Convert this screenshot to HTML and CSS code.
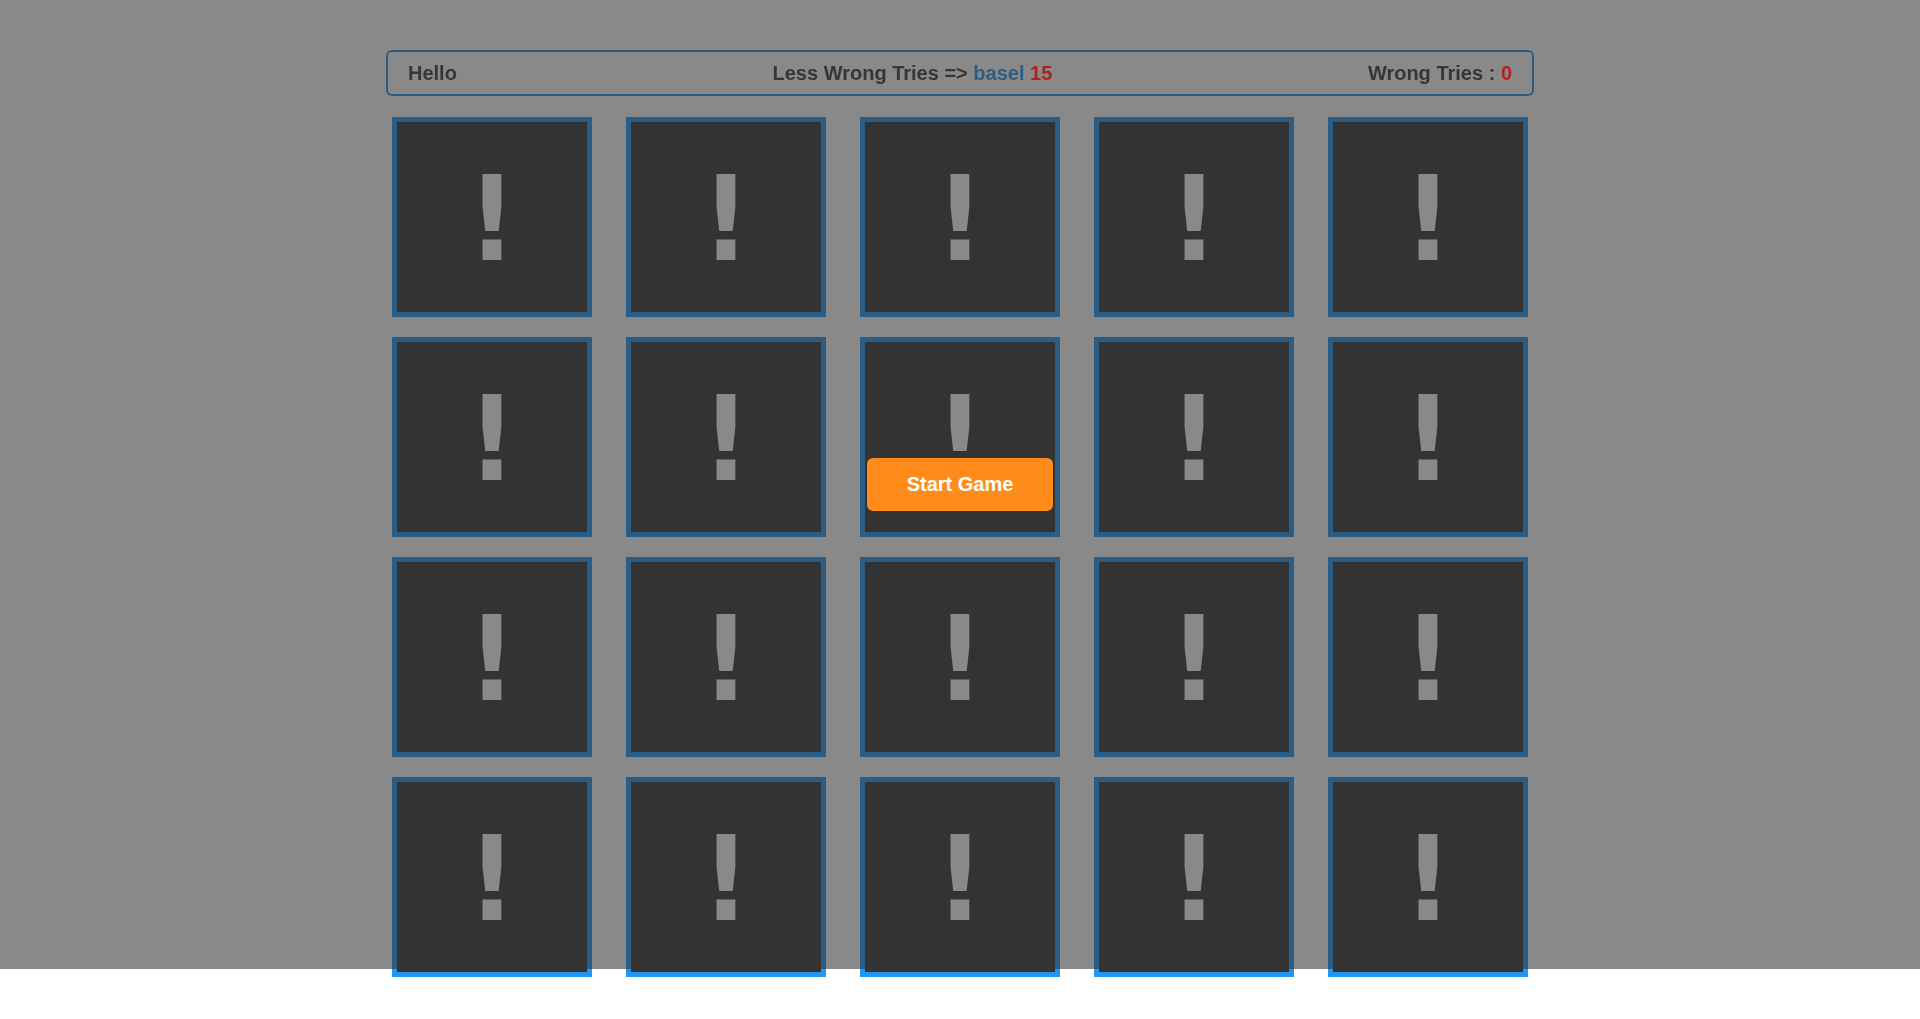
FILE: index.html
```html
<!DOCTYPE html>
<html lang="en">
<head>
<meta charset="utf-8">
<title>Memory Game</title>
<link rel="stylesheet" href="styles.css">
</head>
<body>
  <div class="info-bar">
    <div class="name">Hello</div>
    <div class="best">Less Wrong Tries =&gt; <span class="best-name">basel</span> <span class="num">15</span></div>
    <div class="tries">Wrong Tries : <span class="num">0</span></div>
  </div>

  <div class="board">
    <div class="card"></div><div class="card"></div><div class="card"></div><div class="card"></div><div class="card"></div>
    <div class="card"></div><div class="card"></div><div class="card"></div><div class="card"></div><div class="card"></div>
    <div class="card"></div><div class="card"></div><div class="card"></div><div class="card"></div><div class="card"></div>
    <div class="card"></div><div class="card"></div><div class="card"></div><div class="card"></div><div class="card"></div>
  </div>

  <div class="overlay">
    <button class="start-btn">Start Game</button>
  </div>
</body>
</html>
```

FILE: styles.css
```css
* {
  box-sizing: border-box;
}

html, body {
  margin: 0;
  padding: 0;
}

body {
  background: #ffffff;
  font-family: "Liberation Sans", Arial, sans-serif;
}

.info-bar {
  position: relative;
  z-index: 2;
  width: 1148px;
  margin: 50px auto 0;
  padding: 10px 20px;
  border: 2px solid #2d5d82;
  border-radius: 6px;
  display: flex;
  justify-content: space-between;
  font-size: 20px;
  line-height: 22px;
  font-weight: bold;
  color: #363636;
}

.best-name {
  color: #2d5d82;
}

.num {
  color: #ad2222;
}

.board {
  display: grid;
  grid-template-columns: repeat(5, 200px);
  column-gap: 34px;
  row-gap: 20px;
  justify-content: center;
  margin-top: 21px;
}

.card {
  width: 200px;
  height: 200px;
  border: 5px solid #2196f3;
  background: #333333;
  text-align: center;
  overflow: hidden;
}

.card::before {
  content: "!";
  display: block;
  font-family: "DejaVu Sans Condensed", "DejaVu Sans", sans-serif;
  font-weight: bold;
  font-stretch: condensed;
  font-size: 118px;
  line-height: 194px;
  color: #ffffff;
}

.overlay {
  position: fixed;
  top: 0;
  left: 0;
  width: 100%;
  height: 969px;
  z-index: 1;
  background: rgba(51, 51, 51, 0.58);
  display: flex;
  align-items: center;
  justify-content: center;
}

.start-btn {
  border: none;
  background: #ff8c1a;
  color: #ffffff;
  font-family: "Liberation Sans", Arial, sans-serif;
  font-weight: bold;
  font-size: 20px;
  line-height: 23px;
  padding: 15px 40px;
  border-radius: 6px;
  cursor: pointer;
}
```
